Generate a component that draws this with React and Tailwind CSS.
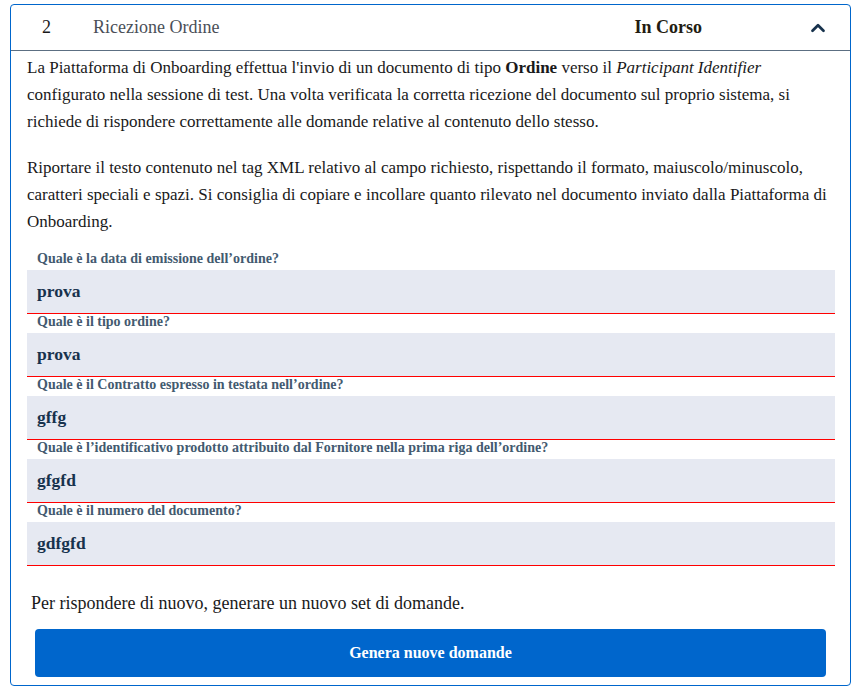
import React from 'react';
import { ChevronUp } from 'lucide-react';

const questions = [
  { label: 'Quale è la data di emissione dell’ordine?', value: 'prova' },
  { label: 'Quale è il tipo ordine?', value: 'prova' },
  { label: 'Quale è il Contratto espresso in testata nell’ordine?', value: 'gffg' },
  { label: 'Quale è l’identificativo prodotto attribuito dal Fornitore nella prima riga dell’ordine?', value: 'gfgfd' },
  { label: 'Quale è il numero del documento?', value: 'gdfgfd' }
];

export default function App() {
  return (
    <div className="bg-white w-[859px] h-[692px] pt-[4px] pl-[10px] font-['Liberation_Serif',serif]">
      <div className="w-[841px] h-[682px] border border-[#0066cc] rounded-[4px] flex flex-col">
        {/* Header */}
        <div className="h-[46px] flex items-center border-b border-[#5c6f82] pl-[31px] pr-[21px]">
          <span className="w-[51px] text-[18px] text-[#19191a]">2</span>
          <span className="flex-1 text-[18px] text-[#4a4f57]">Ricezione Ordine</span>
          <span className="text-[18px] font-bold text-[#231c12]">In Corso</span>
          <ChevronUp size={22} strokeWidth={3} className="ml-[105px] text-[#17324d]" />
        </div>

        {/* Body */}
        <div className="pl-4 pr-[15px] pt-[3px] text-[17px] leading-[27px] text-[#19191a]">
          <p className="mb-[19px]">
            La Piattaforma di Onboarding effettua l'invio di un documento di tipo <b>Ordine</b> verso il <i>Participant Identifier</i> configurato nella sessione di test. Una volta verificata la corretta ricezione del documento sul proprio sistema, si richiede di rispondere correttamente alle domande relative al contenuto dello stesso.
          </p>
          <p>
            Riportare il testo contenuto nel tag XML relativo al campo richiesto, rispettando il formato, maiuscolo/minuscolo, caratteri speciali e spazi. Si consiglia di copiare e incollare quanto rilevato nel documento inviato dalla Piattaforma di Onboarding.
          </p>

          <div className="mt-[16px] flex flex-col">
            {questions.map((q, i) => (
              <div key={i} className="flex flex-col">
                <label className="h-[19px] pl-[10px] text-[14px] leading-[16px] font-bold text-[#435a70]">{q.label}</label>
                <div className="h-[44px] bg-[#e6e9f2] border-b border-[#ff0000] flex items-center pl-[10px] text-[17.5px] font-bold text-[#17324d]">
                  {q.value}
                </div>
              </div>
            ))}
          </div>
        </div>

        <p className="pl-5 mt-[25px] text-[18px] leading-[24px] text-[#19191a]">
          Per rispondere di nuovo, generare un nuovo set di domande.
        </p>

        <div className="px-6 mt-[14px]">
          <button className="w-full h-[48px] rounded-[4px] bg-[#0066cc] text-white text-[16px] font-bold">
            Genera nuove domande
          </button>
        </div>
      </div>
    </div>
  );
}
